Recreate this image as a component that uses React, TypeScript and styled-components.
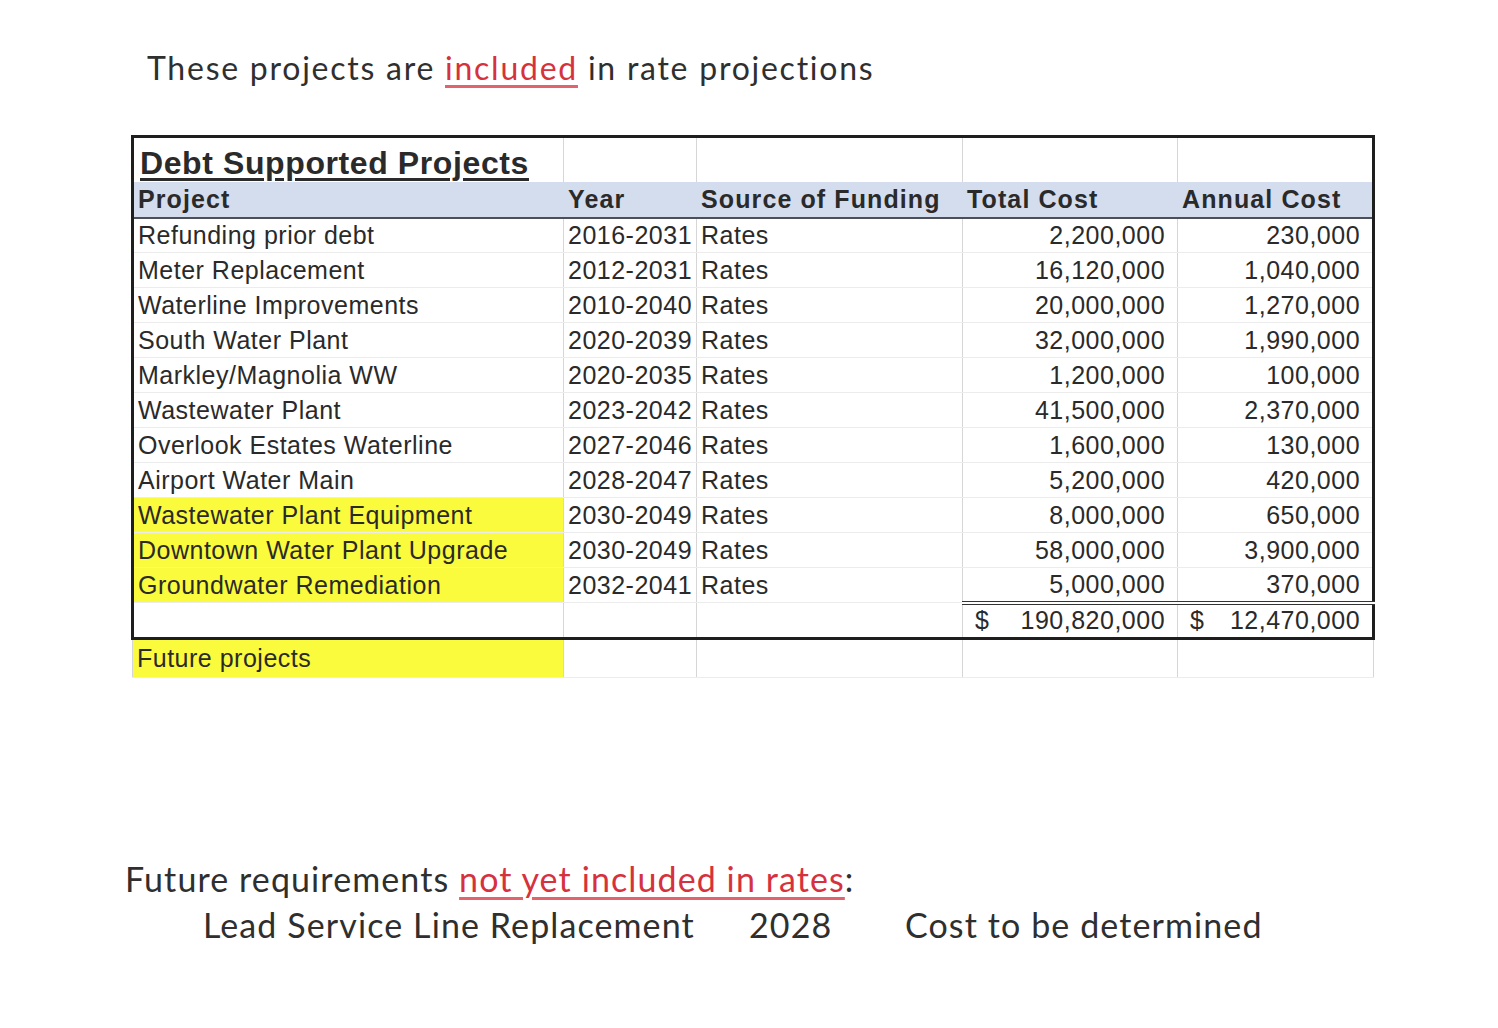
import React from 'react';
import styled, { createGlobalStyle, css } from 'styled-components';

const GlobalStyle = createGlobalStyle`
  html, body {
    margin: 0;
    background: #ffffff;
  }
`;

const Slide = styled.div`
  width: 1498px;
  height: 1028px;
  box-sizing: border-box;
  padding-top: 48px;
  overflow: hidden;
  font-family: Lato, 'Open Sans', sans-serif;
  color: #2f2f2f;
`;

const Heading = styled.div`
  margin-left: 147px;
  font-size: 32px;
  line-height: 40px;
  letter-spacing: 1.75px;
`;

const Marked = styled.span`
  color: #d6323d;
  text-decoration: underline;
  text-decoration-color: #e2636c;
  text-decoration-thickness: 3px;
  text-underline-offset: 5px;
`;

const Sheet = styled.table`
  margin: 47px 0 0 131px;
  border-collapse: collapse;
  table-layout: fixed;
  font-family: 'Liberation Sans', Arial, sans-serif;
  font-size: 25px;
  letter-spacing: 0.5px;
  color: #2a2a2a;
`;

type RowKind = 'title' | 'header' | 'data' | 'total' | 'future';

const rowHeights: Record<RowKind, number> = {
  title: 45,
  header: 36,
  data: 35,
  total: 36,
  future: 39,
};

const Row = styled.tr<{ $kind: RowKind }>`
  height: ${p => rowHeights[p.$kind]}px;

  ${p =>
    p.$kind !== 'future' &&
    css`
      & > td:first-child {
        border-left: 3px solid #1e1e1e;
      }
      & > td:last-child {
        border-right: 3px solid #1e1e1e;
      }
    `}

  ${p =>
    p.$kind === 'title' &&
    css`
      & > td {
        border-top: 3px solid #1e1e1e;
        border-bottom: none;
      }
    `}

  ${p =>
    p.$kind === 'header' &&
    css`
      & > td {
        background: #d4ddee;
        font-weight: 700;
        letter-spacing: 1.1px;
        border-left-color: #d4ddee;
        border-right-color: #d4ddee;
        border-bottom: 2px solid #4a4f5a;
      }
    `}

  ${p =>
    p.$kind === 'total' &&
    css`
      & > td {
        border-bottom: 3px solid #1e1e1e;
      }
    `}
`;

const Cell = styled.td<{ $right?: boolean; $hl?: boolean; $sum?: boolean }>`
  box-sizing: border-box;
  padding: 0 4px;
  line-height: 1;
  white-space: nowrap;
  overflow: visible;
  text-align: ${p => (p.$right ? 'right' : 'left')};
  padding-right: ${p => (p.$right ? '12px' : '4px')};
  background: ${p => (p.$hl ? '#fbfb3e' : 'transparent')};
  border-left: 1px solid #d6d6d6;
  border-right: 1px solid #d6d6d6;
  border-bottom: 1px solid #ececec;
  ${p =>
    p.$sum &&
    css`
      border-top: 4px double #333333;
      padding-left: 12px;
    `}
`;

const TitleCell = styled(Cell)`
  vertical-align: bottom;
  padding: 0 0 3px 6px;
  font-size: 32px;
  font-weight: 700;
  letter-spacing: 0.6px;
  text-decoration: underline;
  text-decoration-thickness: 3px;
  text-underline-offset: 4px;
`;

const Money = styled.div`
  display: flex;
  justify-content: space-between;
`;

const Notes = styled.div`
  margin: 178px 0 0 125px;
  font-size: 34px;
  line-height: 46px;
  letter-spacing: 1.1px;
`;

const NoteLine = styled.div`
  display: grid;
  grid-template-columns: 546px 156px auto;
  padding-left: 78px;
`;

const widths = [431, 132, 266, 215, 196];

const projects: [string, string, string, string, boolean][] = [
  ['Refunding prior debt', '2016-2031', '2,200,000', '230,000', false],
  ['Meter Replacement', '2012-2031', '16,120,000', '1,040,000', false],
  ['Waterline Improvements', '2010-2040', '20,000,000', '1,270,000', false],
  ['South Water Plant', '2020-2039', '32,000,000', '1,990,000', false],
  ['Markley/Magnolia WW', '2020-2035', '1,200,000', '100,000', false],
  ['Wastewater Plant', '2023-2042', '41,500,000', '2,370,000', false],
  ['Overlook Estates Waterline', '2027-2046', '1,600,000', '130,000', false],
  ['Airport Water Main', '2028-2047', '5,200,000', '420,000', false],
  ['Wastewater Plant Equipment', '2030-2049', '8,000,000', '650,000', true],
  ['Downtown Water Plant Upgrade', '2030-2049', '58,000,000', '3,900,000', true],
  ['Groundwater Remediation', '2032-2041', '5,000,000', '370,000', true],
];

export default function App() {
  return (
    <Slide>
      <GlobalStyle />
      <Heading>
        These projects are <Marked>included</Marked> in rate projections
      </Heading>

      <Sheet>
        <colgroup>
          {widths.map(w => (
            <col key={w} style={{ width: w }} />
          ))}
        </colgroup>
        <tbody>
          <Row $kind="title">
            <TitleCell>Debt Supported Projects</TitleCell>
            <Cell />
            <Cell />
            <Cell />
            <Cell />
          </Row>
          <Row $kind="header">
            <Cell>Project</Cell>
            <Cell>Year</Cell>
            <Cell>Source of Funding</Cell>
            <Cell>Total Cost</Cell>
            <Cell>Annual Cost</Cell>
          </Row>
          {projects.map(([name, years, total, annual, hl]) => (
            <Row $kind="data" key={name}>
              <Cell $hl={hl}>{name}</Cell>
              <Cell>{years}</Cell>
              <Cell>Rates</Cell>
              <Cell $right>{total}</Cell>
              <Cell $right>{annual}</Cell>
            </Row>
          ))}
          <Row $kind="total">
            <Cell />
            <Cell />
            <Cell />
            <Cell $sum $right>
              <Money>
                <span>$</span>
                <span>190,820,000</span>
              </Money>
            </Cell>
            <Cell $sum $right>
              <Money>
                <span>$</span>
                <span>12,470,000</span>
              </Money>
            </Cell>
          </Row>
          <Row $kind="future">
            <Cell $hl>Future projects</Cell>
            <Cell />
            <Cell />
            <Cell />
            <Cell />
          </Row>
        </tbody>
      </Sheet>

      <Notes>
        <div>
          Future requirements <Marked>not yet included in rates</Marked>:
        </div>
        <NoteLine>
          <span>Lead Service Line Replacement</span>
          <span>2028</span>
          <span>Cost to be determined</span>
        </NoteLine>
      </Notes>
    </Slide>
  );
}
